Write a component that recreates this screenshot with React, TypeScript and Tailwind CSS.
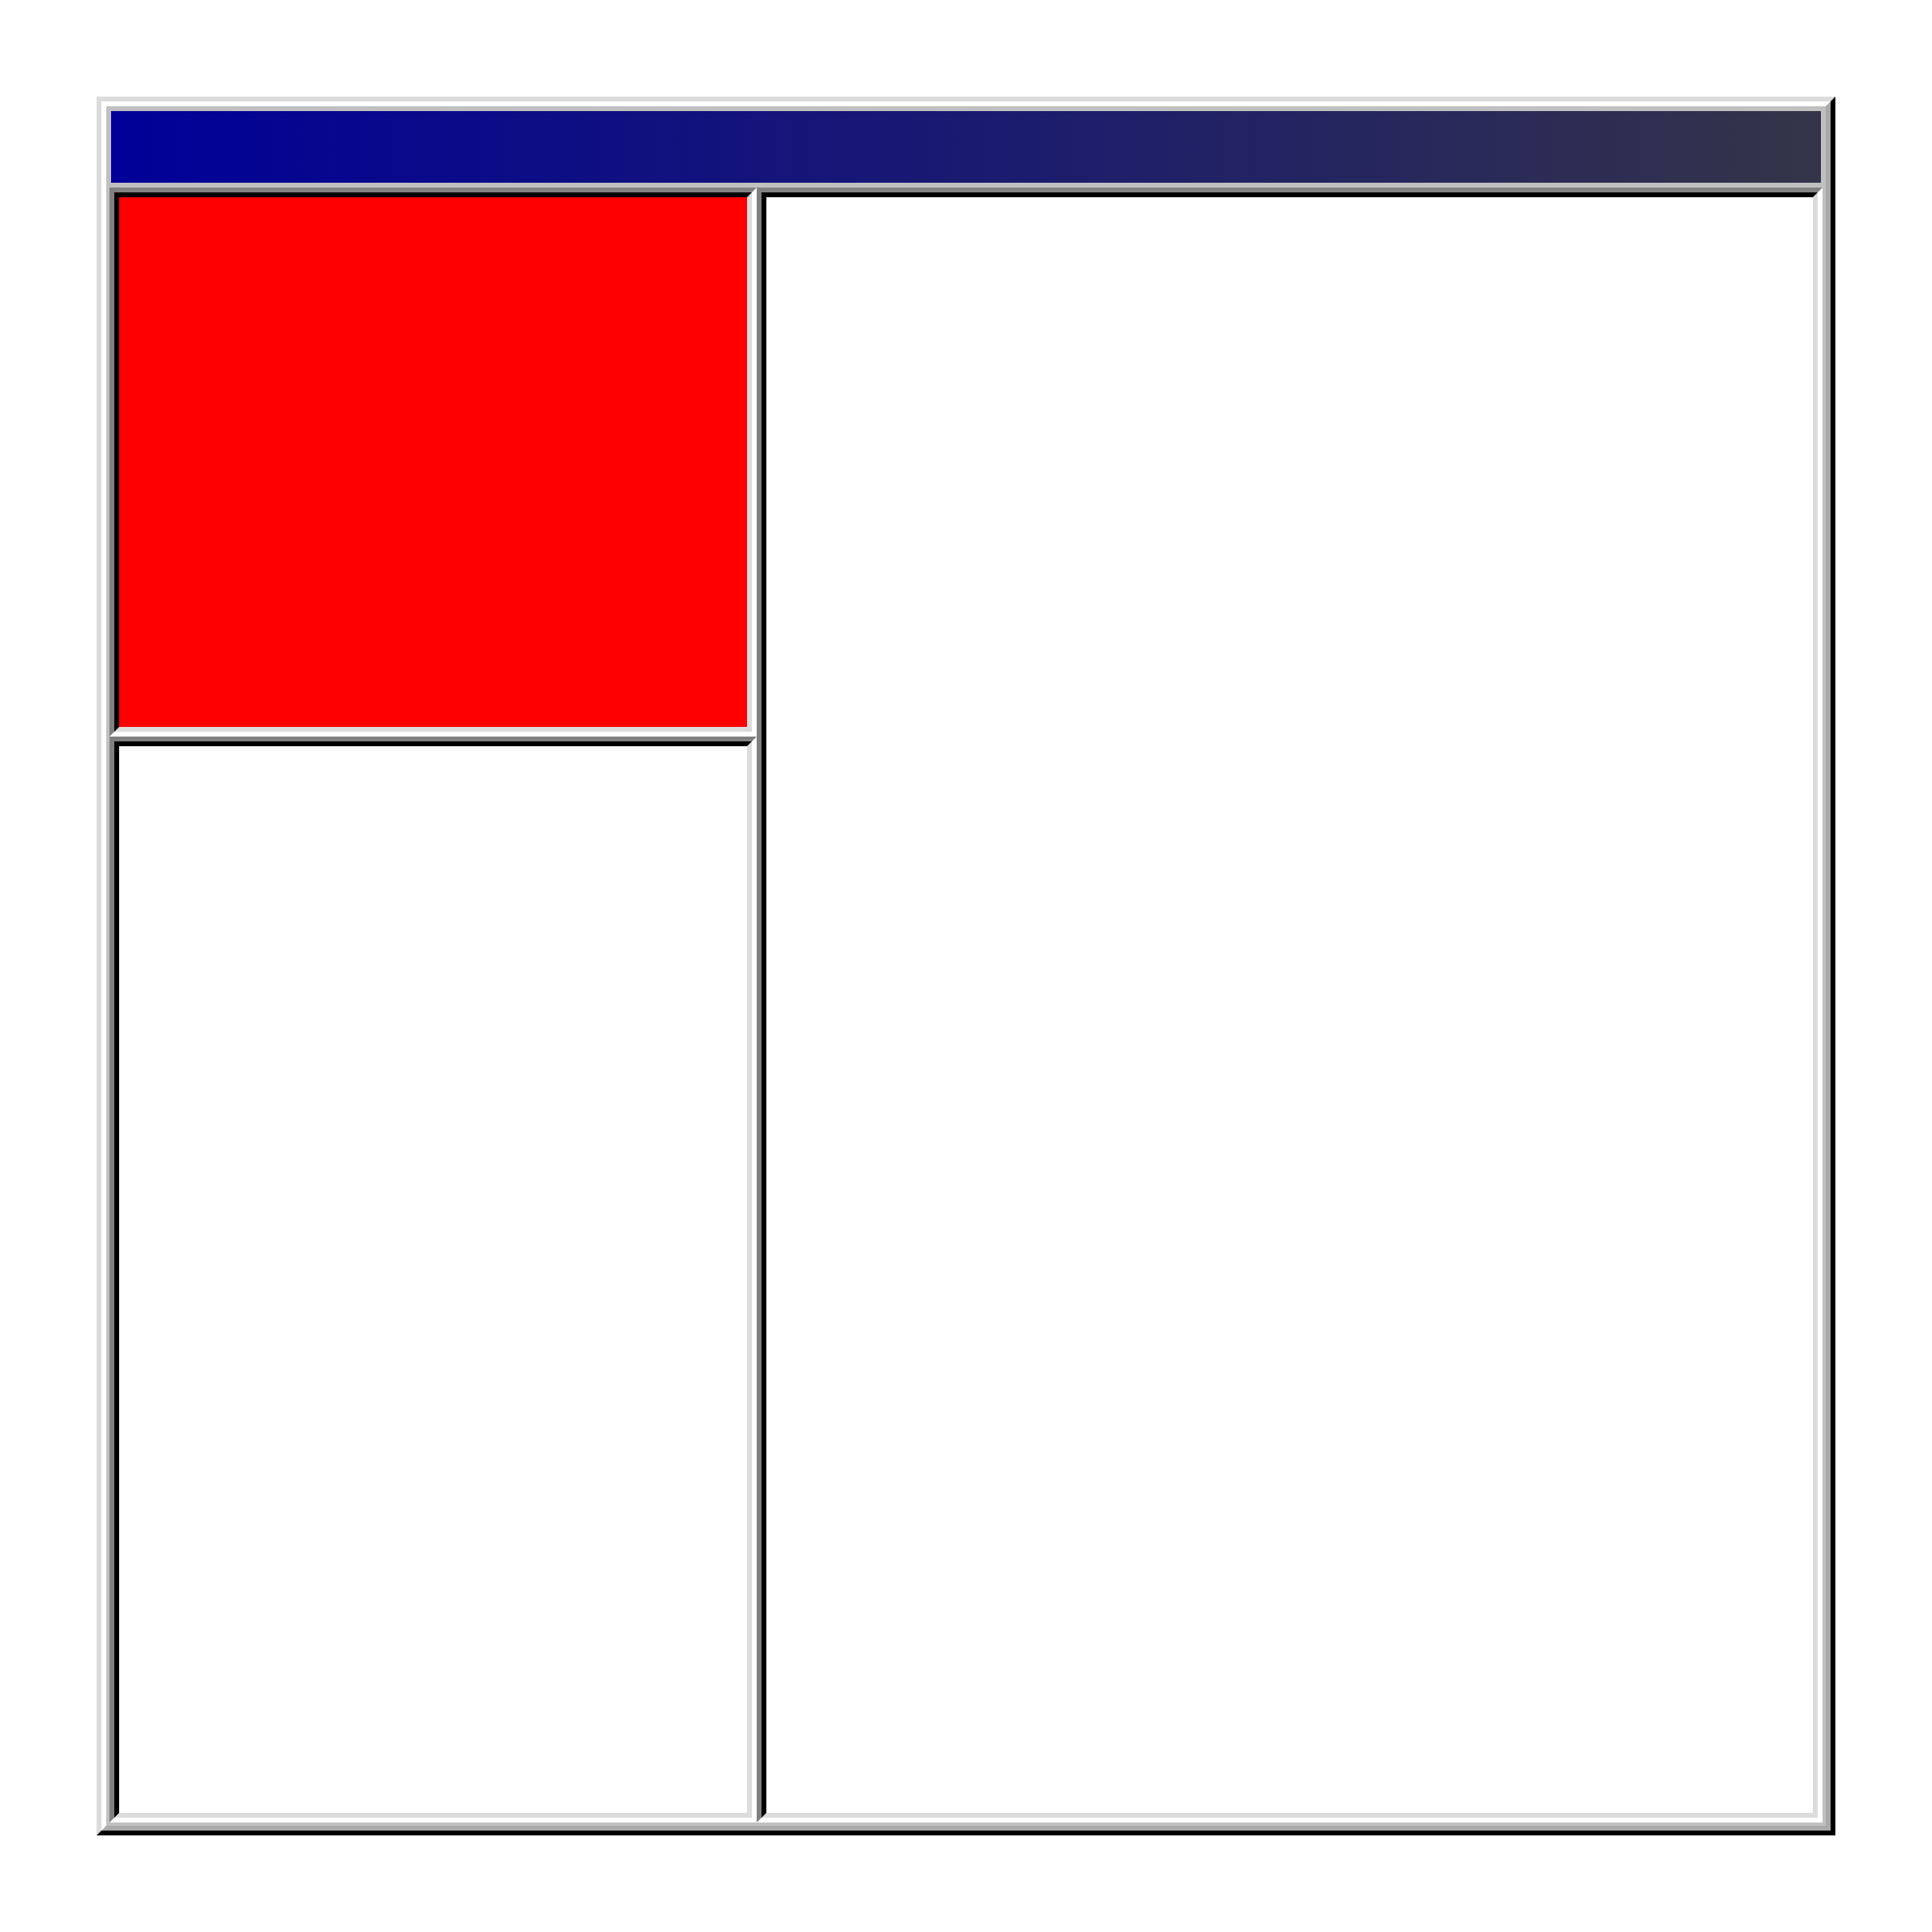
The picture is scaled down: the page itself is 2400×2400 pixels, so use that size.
import React from "react";

function Frame({ outer, inner }: { outer: string; inner: string }) {
  return (
    <div
      className={
        "border-[6px] border-t-[#808080] border-l-[#808080] border-r-white border-b-white " +
        outer
      }
    >
      <div
        className={
          "h-full w-full border-[6px] border-t-black border-l-black border-r-[#dcdcdc] border-b-[#dcdcdc] " +
          inner
        }
      />
    </div>
  );
}

export default function App() {
  return (
    <div className="w-[2400px] h-[2400px] bg-white p-[120px]">
      <div className="w-[2160px] h-[2160px] border-[6px] border-t-[#dcdcdc] border-l-[#dcdcdc] border-r-black border-b-black">
        <div className="h-full w-full border-[6px] border-t-white border-l-white border-r-[#a9a9a9] border-b-[#a9a9a9] bg-[#c0c0c0] flex flex-col">
          <div className="mx-[6px] mt-[6px] h-[89px] shrink-0 bg-[linear-gradient(to_right,#000099,#343449)]" />
          <div className="flex-1 min-h-0 flex mx-[4px] mt-[6px] mb-[4px]">
            <div className="w-[804px] shrink-0 flex flex-col">
              <Frame outer="h-[682px] shrink-0" inner="bg-[#ff0000]" />
              <Frame outer="flex-1 min-h-0" inner="bg-white" />
            </div>
            <Frame outer="flex-1 min-w-0" inner="bg-white" />
          </div>
        </div>
      </div>
    </div>
  );
}
